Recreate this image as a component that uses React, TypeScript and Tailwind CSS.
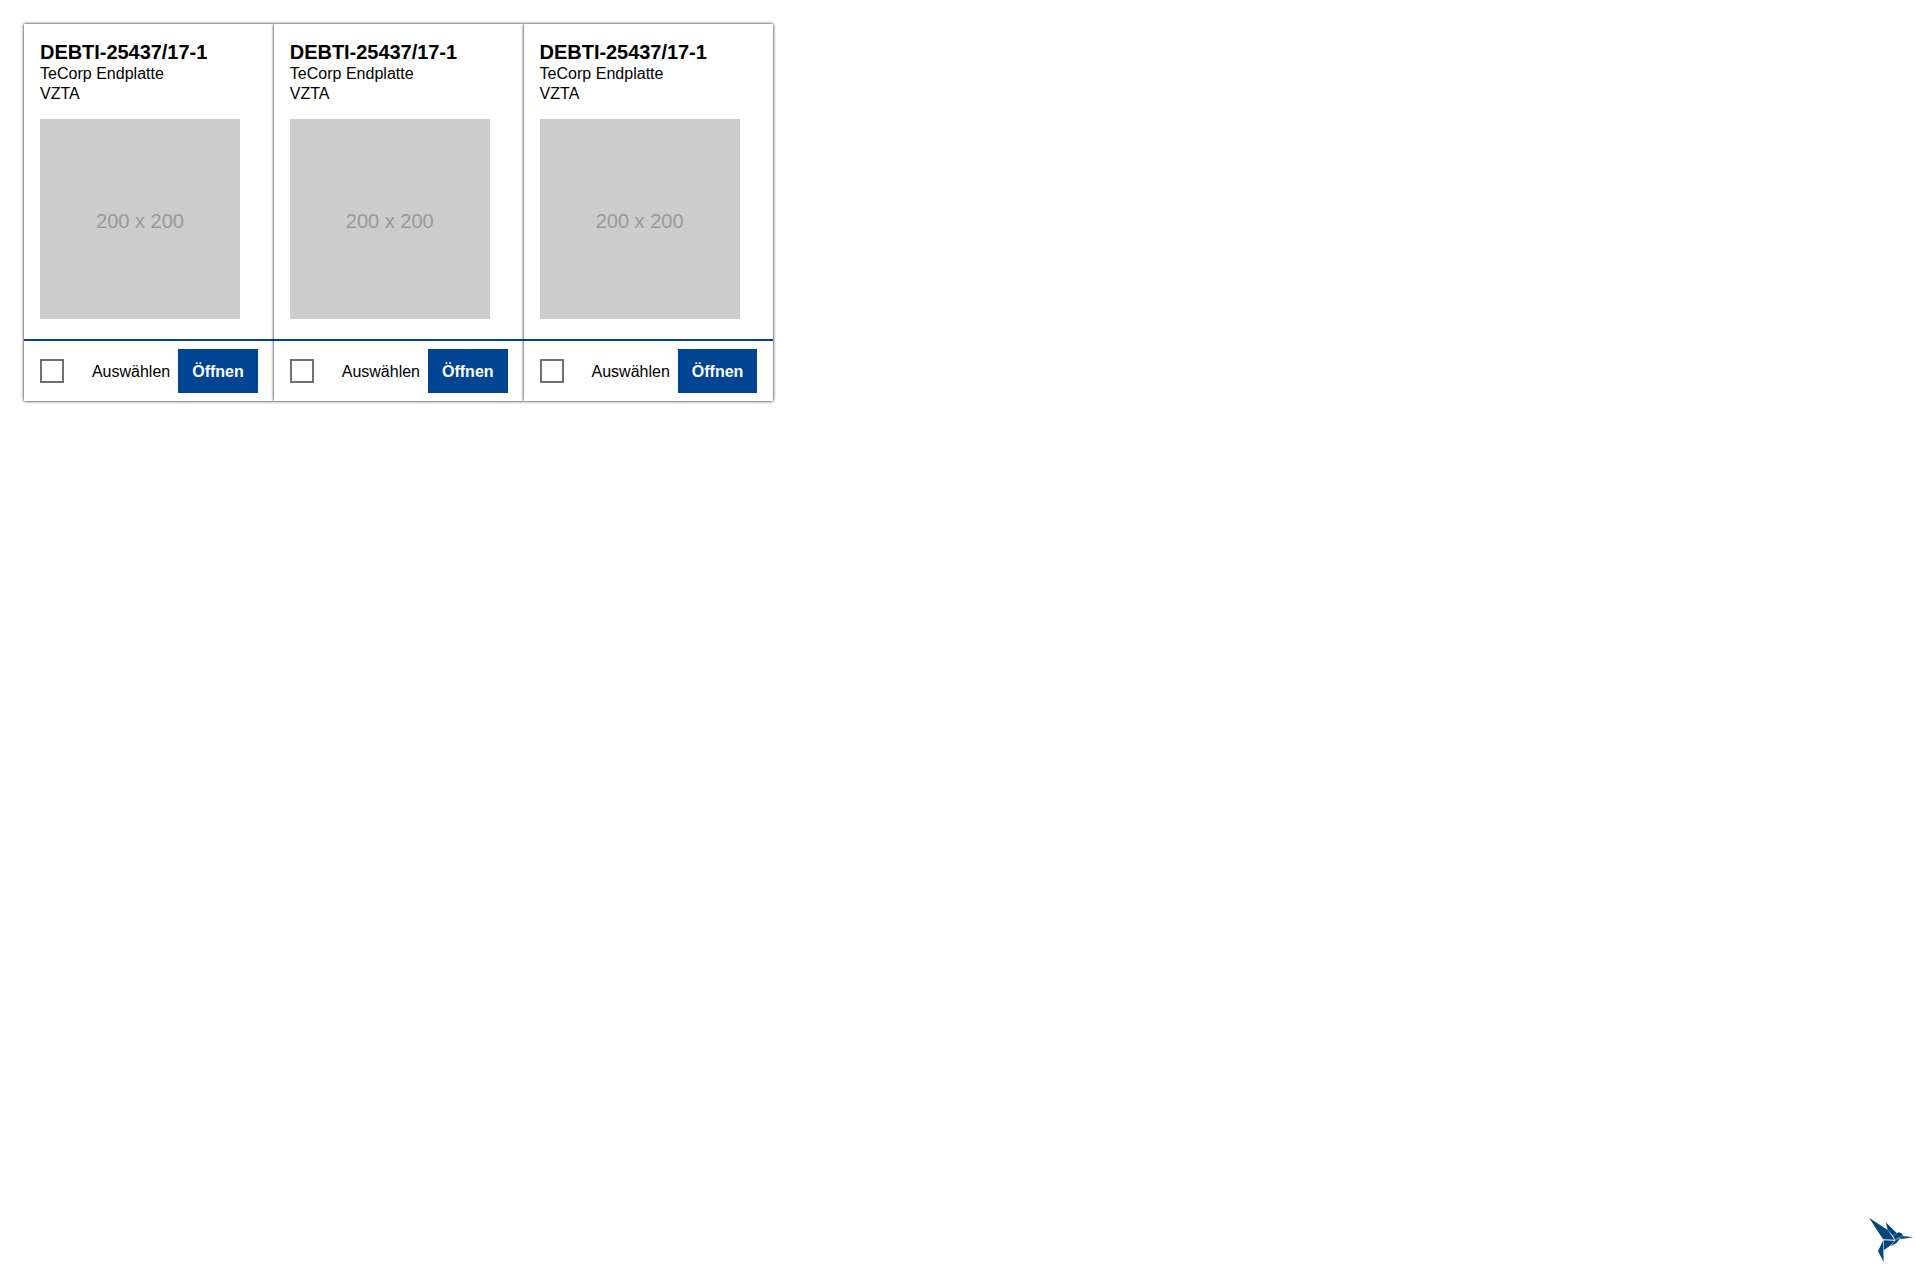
const cards = [0, 1, 2];

function Card() {
  return (
    <article className="h-[377px] w-[249.8px] shrink-0 bg-white shadow-[0_0_3px_0_#000000]">
      <div className="h-[315px] px-4 pt-4">
        <h2 className="h-6 text-[20px] leading-6 font-bold tracking-[-0.04px] whitespace-nowrap">DEBTI-25437/17-1</h2>
        <p className="h-5 text-base leading-5 tracking-[0.015px]">TeCorp Endplatte</p>
        <p className="h-5 text-base leading-5">VZTA</p>
        <div className="mt-[15px] flex size-[200px] items-center justify-center bg-[#cccccc] pt-1 text-[20px] text-[#999999]">
          200 x 200
        </div>
      </div>
      <div className="flex h-[62px] items-start border-t-2 border-[#004494] px-4 pt-2">
        <span className="mt-[10px] size-6 shrink-0 border-2 border-[#707070]" />
        <span className="ml-auto text-base leading-[46px]">Auswählen</span>
        <button className="ml-2 h-11 w-[79.6px] shrink-0 bg-[#004494] pt-0.5 text-base font-bold text-white">
          Öffnen
        </button>
      </div>
    </article>
  );
}

function Hummingbird() {
  return (
    <svg viewBox="0 0 180 210" className="fixed right-0 bottom-[5px] h-[70px] w-[60px]" fill="#00477c">
      <path d="M27 38 L84 76 L103 104 L69 103 Z" />
      <path d="M77 52 L111 85 L99 93 L83 74 Z" />
      <path d="M100 93 L116 82 L125 85 L129 92 L115 98 L105 105 Z" />
      <path d="M115 99 L128 93 L160 97 L124 102 Z" />
      <path d="M71 106 L104 107 L88 124 L71 136 Z" />
      <path d="M105 107 L114 100 L119 102 L109 115 L90 124 Z" />
      <path d="M69 107 L70 136 L71 171 L54 138 Z" />
    </svg>
  );
}

export default function App() {
  return (
    <main className="min-h-screen bg-white p-6 font-['Liberation_Sans',Arial,sans-serif] text-black">
      <div className="flex">
        {cards.map((id) => (
          <Card key={id} />
        ))}
      </div>
      <Hummingbird />
    </main>
  );
}
